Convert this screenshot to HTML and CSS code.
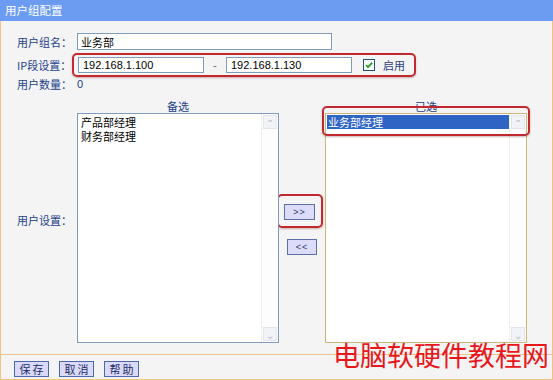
FILE: index.html
```
<!DOCTYPE html>
<html lang="zh-CN">
<head>
	<meta charset="UTF-8">
	<title>用户组配置</title>
	<link rel="stylesheet" href="styles.css">
</head>
<body>
	<div class="title">用户组配置</div>
	<div class="panel">
		<div class="form">
			<div class="row r-name">
				<span class="label">用户组名：</span>
				<input type="text" class="txt name" value="业务部">
			</div>
			<div class="row r-ip">
				<span class="label">IP段设置：</span>
				<span class="mark ip-mark">
					<input type="text" class="txt ip" value="192.168.1.100">
					<span class="dash">-</span>
					<input type="text" class="txt ip" value="192.168.1.130">
					<span class="check">
						<svg width="12" height="12" viewBox="0 0 12 12">
							<rect x="0.5" y="0.5" width="11" height="11" fill="#fff" stroke="#1c5180"/>
							<path d="M3 6 L5 8.2 L9.2 3.6" fill="none" stroke="#21a121" stroke-width="1.8"/>
						</svg>
					</span>
					<span class="on">启用</span>
				</span>
			</div>
			<div class="row r-count">
				<span class="label">用户数量：</span>
				<span class="val">0</span>
			</div>
			<div class="row r-users">
				<span class="label">用户设置：</span>
				<div class="lists">
					<div class="col">
						<div class="cap">备选</div>
						<div class="list blue">
							<div class="items">
								<div class="item">产品部经理</div>
								<div class="item">财务部经理</div>
							</div>
							<div class="scroll">
								<span class="arr">&#8963;</span>
								<span class="arr down">&#8964;</span>
							</div>
						</div>
					</div>
					<div class="mid">
						<span class="mark btn-mark"><button class="mv">&gt;&gt;</button></span>
						<button class="mv back">&lt;&lt;</button>
					</div>
					<div class="col right">
						<div class="cap">已选</div>
						<div class="list tan">
							<div class="items">
								<div class="item sel">业务部经理</div>
							</div>
							<div class="scroll">
								<span class="arr">&#8963;</span>
								<span class="arr down">&#8964;</span>
							</div>
						</div>
						<span class="mark sel-mark"></span>
					</div>
				</div>
			</div>
		</div>
		<div class="footer">
			<button class="btn">保存</button>
			<button class="btn">取消</button>
			<button class="btn">帮助</button>
		</div>
	</div>
	<div class="watermark">电脑软硬件教程网</div>
</body>
</html>
```

FILE: styles.css
```
body {
	margin: 0;
	width: 553px;
	height: 380px;
	position: relative;
	overflow: hidden;
	background: #f4f4f4;
	font-family: "Noto Sans CJK SC", "Liberation Sans", sans-serif;
	font-size: 11px;
	line-height: 14px;
	color: #23418a;
}
.title {
	height: 21px;
	line-height: 21px;
	padding-left: 5px;
	background: #6b9cf1;
	color: #fff;
	font-size: 11.5px;
}
.panel {
	border: 1px solid #f1c286;
	border-top: none;
	height: 358px;
	display: flex;
	flex-direction: column;
}
.form {
	padding: 12px 0 0 16px;
	height: 321px;
}
.row {
	display: flex;
	align-items: center;
}
.label {
	width: 60px;
	flex: none;
	white-space: nowrap;
}
.txt {
	box-sizing: border-box;
	margin: 0;
	border: 1px solid #7f9db9;
	background: #fff;
	color: #000;
	outline: none;
}
.name {
	width: 255px;
	height: 17px;
	padding: 0 3px;
	font-family: "Noto Sans CJK SC", sans-serif;
	font-size: 11px;
	line-height: 15px;
}
.r-name {
	height: 17px;
}
.r-ip {
	margin-top: 3px;
	height: 24px;
}
.mark {
	box-sizing: border-box;
	border: 2px solid #c2292e;
	border-radius: 5px;
	box-shadow: 0 1px 2px rgba(120, 40, 40, 0.35);
}
.ip-mark {
	display: flex;
	align-items: center;
	flex: none;
	white-space: nowrap;
	margin-left: -5px;
	padding: 2px 9px 2px 4px;
	height: 24px;
}
.ip {
	width: 126px;
	height: 16px;
	padding: 0 4px;
	font-family: "Liberation Sans", sans-serif;
	font-size: 11px;
	line-height: 14px;
}
.dash {
	width: 22px;
	text-align: center;
	color: #555;
}
.check {
	display: flex;
	margin-left: 11px;
}
.on {
	margin-left: 8px;
	color: #2b3f7a;
}
.r-count {
	height: 15px;
	line-height: 15px;
}
.val {
	font-family: "Liberation Sans", sans-serif;
}
.r-users > .label {
	padding-top: 5px;
}
.lists {
	display: flex;
}
.col {
	width: 202px;
	position: relative;
}
.cap {
	box-sizing: border-box;
	height: 21px;
	line-height: 14px;
	padding-top: 7px;
	text-align: center;
}
.list {
	box-sizing: border-box;
	height: 230px;
	background: #fff;
	display: flex;
}
.blue {
	border: 1px solid #7f9db9;
}
.tan {
	border: 1px solid #cdb57a;
}
.items {
	flex: 1;
	padding: 1px 0 0 1px;
	color: #000;
}
.item {
	height: 14px;
	line-height: 14px;
	padding-left: 1px;
}
.blue .item {
	padding-left: 2px;
}
.sel {
	background: #2f63c4;
	color: #fff;
}
.scroll {
	width: 16px;
	display: flex;
	flex-direction: column;
	justify-content: space-between;
	background: #fdfdfd;
	border-left: 1px solid #eef0f2;
}
.arr {
	box-sizing: border-box;
	margin: 1px;
	height: 14px;
	border: 1px solid #e2e6ec;
	background: #f1f3f6;
	color: #b8bcc4;
	font-size: 10px;
	line-height: 14px;
	text-align: center;
}
.mid {
	width: 46px;
	display: flex;
	flex-direction: column;
	padding-top: 102px;
}
.btn-mark {
	display: block;
	margin-left: -2px;
	width: 46px;
	padding: 7px 0 6px 5px;
}
.mv {
	box-sizing: border-box;
	width: 31px;
	height: 16px;
	padding: 0;
	margin: 0;
	border: 1px solid #5b6fa8;
	background: #dcdcf9;
	color: #2b3768;
	font-family: "Liberation Sans", sans-serif;
	font-size: 9px;
	letter-spacing: 1px;
	line-height: 14px;
}
.back {
	margin: 11px 0 0 8px;
	width: 30px;
}
.sel-mark {
	position: absolute;
	left: -3px;
	top: 14px;
	width: 208px;
	height: 30px;
}
.footer {
	border-top: 1px solid #f1c286;
	padding: 6px 0 0 13px;
	display: flex;
	gap: 10px;
}
.btn {
	box-sizing: border-box;
	width: 35px;
	height: 16px;
	margin: 0;
	padding: 0 0 0 2px;
	border: 1px solid #4d68a6;
	background: #dadaf8;
	color: #1d2d68;
	font-family: "Noto Sans CJK SC", sans-serif;
	font-size: 11px;
	line-height: 14px;
	letter-spacing: 2px;
}
.watermark {
	position: absolute;
	left: 333px;
	top: 341px;
	font-size: 27px;
	line-height: 1;
	color: #e8171c;
	white-space: nowrap;
}
```
